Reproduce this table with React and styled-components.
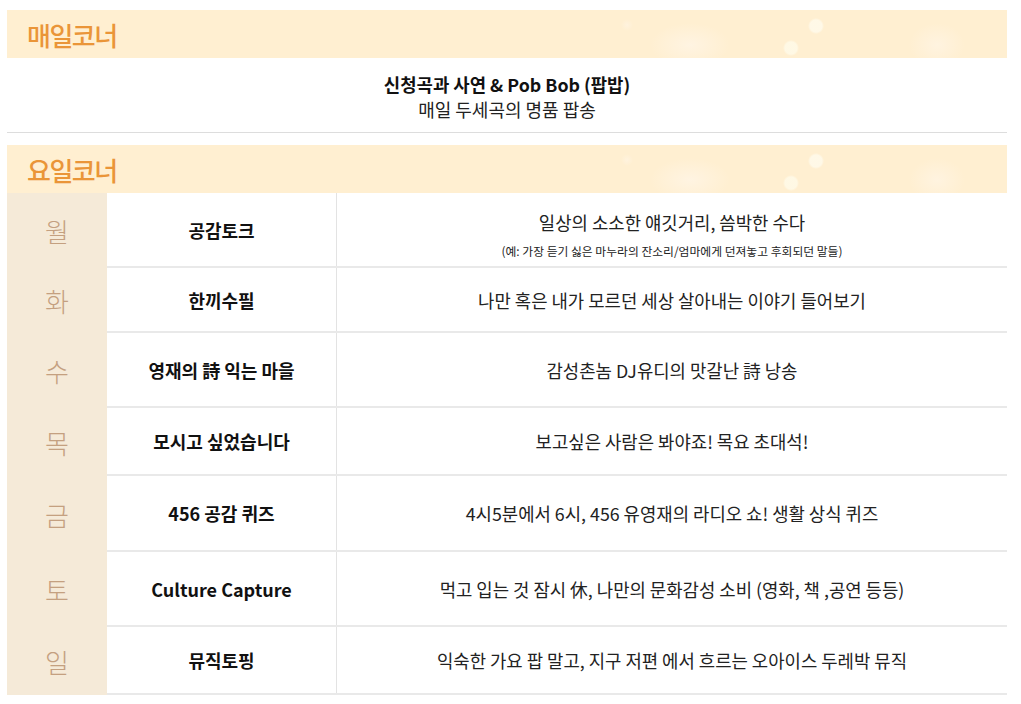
import React from "react";
import styled, { createGlobalStyle } from "styled-components";

const GlobalStyle = createGlobalStyle`
  body {
    margin: 0;
    background: #fff;
    font-family: "Noto Sans CJK KR", "Noto Sans", sans-serif;
    color: #222;
  }
`;

const daily = {
  title: "신청곡과 사연 & Pob Bob (팝밥)",
  subTitle: "매일 두세곡의 명품 팝송",
};

const weekly = [
  {
    day: "월",
    name: "공감토크",
    desc: "일상의 소소한 얘깃거리, 씀박한 수다",
    note: "(예: 가장 듣기 싫은 마누라의 잔소리/엄마에게 던져놓고 후회되던 말들)",
    height: 75,
  },
  { day: "화", name: "한끼수필", desc: "나만 혹은 내가 모르던 세상 살아내는 이야기 들어보기", height: 65 },
  { day: "수", name: "영재의 詩 익는 마을", desc: "감성촌놈 DJ유디의 맛갈난 詩 낭송", height: 75 },
  { day: "목", name: "모시고 싶었습니다", desc: "보고싶은 사람은 봐야죠! 목요 초대석!", height: 68 },
  { day: "금", name: "456 공감 퀴즈", desc: "4시5분에서 6시, 456 유영재의 라디오 쇼! 생활 상식 퀴즈", height: 76 },
  { day: "토", name: "Culture Capture", desc: "먹고 입는 것 잠시 休, 나만의 문화감성 소비 (영화, 책 ,공연 등등)", height: 75 },
  { day: "일", name: "뮤직토핑", desc: "익숙한 가요 팝 말고, 지구 저편 에서 흐르는 오아이스 두레박 뮤직", height: 68 },
];

export default function App() {
  return (
    <Page>
      <GlobalStyle />
      <Band>
        <h2>매일코너</h2>
      </Band>
      <Daily>
        <strong>{daily.title}</strong>
        <span>{daily.subTitle}</span>
      </Daily>
      <Band $gap>
        <h2>요일코너</h2>
      </Band>
      <Table>
        {weekly.map((row) => (
          <Row key={row.day} style={{ height: row.height }}>
            <Day>{row.day}</Day>
            <Name>{row.name}</Name>
            <Desc $note={!!row.note}>
              <p>{row.desc}</p>
              {row.note && <small>{row.note}</small>}
            </Desc>
          </Row>
        ))}
      </Table>
    </Page>
  );
}

const Page = styled.div`
  width: 1000px;
  padding: 10px 0 0 7px;
`;

const Band = styled.div`
  height: 48px;
  margin-top: ${(p) => (p.$gap ? "12px" : "0")};
  display: flex;
  align-items: center;
  padding-left: 20px;
  background-color: #ffefd1;
  background-image:
    radial-gradient(circle at 809px 16px, rgba(255, 250, 235, 0.85) 0, rgba(255, 250, 235, 0.85) 6px, transparent 8px),
    radial-gradient(circle at 784px 38px, rgba(255, 250, 232, 0.85) 0, rgba(255, 250, 232, 0.85) 6px, transparent 8px),
    radial-gradient(ellipse 40px 22px at 683px 35px, rgba(255, 245, 230, 0.8), transparent 100%),
    radial-gradient(ellipse 28px 22px at 930px 35px, rgba(255, 245, 230, 0.7), transparent 100%),
    radial-gradient(circle at 620px 15px, rgba(255, 245, 230, 0.6), transparent 6px);
  h2 {
    margin: 0;
    font-size: 26px;
    font-weight: 500;
    letter-spacing: -1.5px;
    color: #ea9538;
  }
`;

const Daily = styled.div`
  height: 75px;
  box-sizing: border-box;
  padding-top: 14px;
  border-bottom: 1px solid #dddddd;
  display: flex;
  flex-direction: column;
  align-items: center;
  font-size: 17.8px;
  line-height: 25px;
  strong {
    font-weight: 700;
    color: #111;
  }
  span {
    font-size: 18px;
    color: #222;
  }
`;

const Table = styled.div`
  display: flex;
  flex-direction: column;
`;

const Row = styled.div`
  display: grid;
  grid-template-columns: 100px 230px 1fr;
  box-sizing: border-box;
  border-bottom: 2px solid #e9e9e9;
`;

const Day = styled.div`
  background: #f5ead8;
  display: flex;
  align-items: center;
  justify-content: center;
  font-size: 26px;
  font-weight: 300;
  color: #c4a080;
  margin-bottom: -2px;
`;

const Name = styled.div`
  display: flex;
  align-items: center;
  justify-content: center;
  font-size: 18px;
  font-weight: 700;
  color: #111;
  border-right: 1px solid #e3e3e3;
`;

const Desc = styled.div`
  display: flex;
  flex-direction: column;
  align-items: center;
  justify-content: center;
  padding-top: ${(p) => (p.$note ? "8px" : "0")};
  p {
    margin: 0;
    font-size: 17.8px;
    line-height: 24px;
    color: #222;
  }
  small {
    margin-top: 10px;
    font-size: 11.8px;
    line-height: 14px;
    color: #222;
  }
`;
